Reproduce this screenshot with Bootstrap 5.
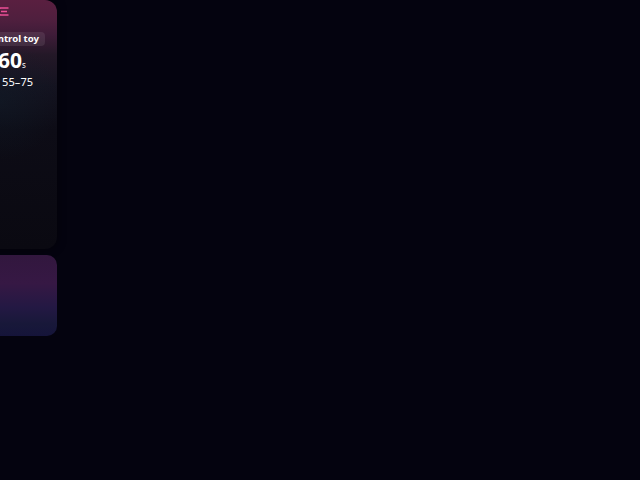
<!doctype html>
<html lang="en">
<head>
<meta charset="utf-8">
<link href="https://cdn.jsdelivr.net/npm/bootstrap@5.3.0/dist/css/bootstrap.min.css" rel="stylesheet">
<style>
html,body{height:100%;background:#04030f;overflow:hidden}
.stage{width:200px;margin-left:-143px;gap:6px;font-family:"Noto Sans","Open Sans",sans-serif;color:#fff}
.toycard{height:249px;border-radius:12px;background:radial-gradient(ellipse 60px 60px at 143px 100px,rgba(16,34,46,.35),rgba(16,34,46,0) 100%),linear-gradient(180deg,#5a1f40 0,#4f1f3e 20px,#3e1c38 35px,#231827 55px,#141320 85px,#0d0c16 130px,#0a0911 100%);box-shadow:0 0 8px rgba(0,0,0,.5)}
.toyhead{height:16px;padding-right:47px}
.toyname{font-size:9.6px;font-weight:700;line-height:14px;margin-top:16px;background:rgba(255,255,255,.09);border-radius:4px;padding:0 6px 0 0;width:188px;text-align:right}
.toytime{font-size:21px;font-weight:700;line-height:26px;margin-top:1px;padding-left:141px}
.toytime span{font-size:8px;font-weight:400}
.toyrange{font-size:11px;line-height:14px;margin-top:-3px;padding-left:145px;letter-spacing:.1px}
.promo{height:81px;border-radius:10px;background:linear-gradient(180deg,#32173e 0,#361844 35%,#231843 65%,#181839 85%,#15143a 100%)}
</style>
</head>
<body>
<div class="stage d-flex flex-column">
<div class="toycard">
<div class="toyhead d-flex justify-content-end align-items-end">
<svg width="14" height="9" viewBox="0 0 14 9" fill="none" stroke="#ec4f96" stroke-width="1.6"><path d="M12.500 1H5a3.500 3.500 0 0 0 0 7h7.500M5 4.500h6"/></svg>
</div>
<div class="toyname">Remote control toy</div>
<div class="toytime">60<span>s</span></div>
<div class="toyrange">55–75</div>
</div>
<div class="promo"></div>
</div>
<script src="https://cdn.jsdelivr.net/npm/bootstrap@5.3.0/dist/js/bootstrap.bundle.min.js"></script>
</body>
</html>
